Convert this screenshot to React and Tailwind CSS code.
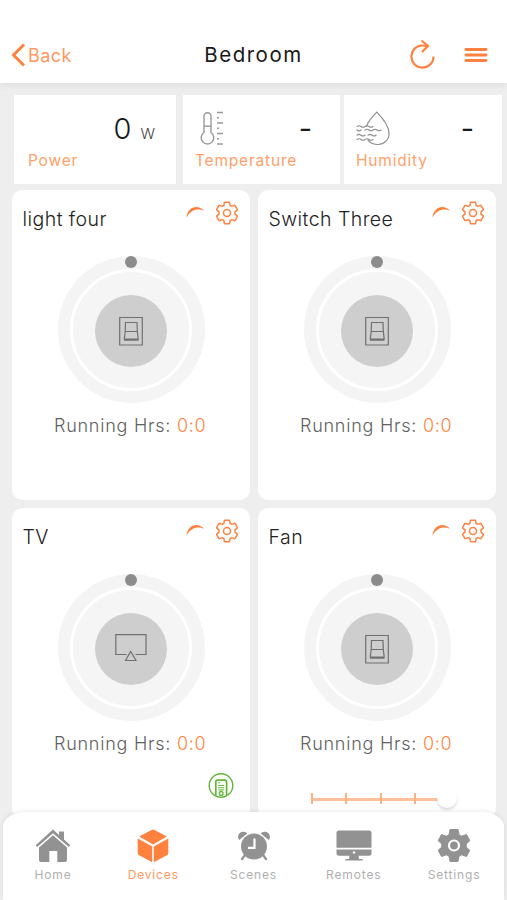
import React from 'react';

const sensors = [
  { label: 'Power', value: '0', unit: 'W', box: 'w-[162px] mr-[7px] pl-[14px]', valueBox: 'right-[21px]' },
  { label: 'Temperature', value: '-', icon: ThermometerIcon, box: 'w-[157px] mr-[4px] pl-[12px]', valueBox: 'right-[28px]' },
  { label: 'Humidity', value: '-', icon: HumidityIcon, box: 'w-[158px] pl-[12px]', valueBox: 'right-[28px]' },
];

const devices = [
  { name: 'light four', icon: SwitchIcon },
  { name: 'Switch Three', icon: SwitchIcon },
  { name: 'TV', icon: TvIcon, remote: true },
  { name: 'Fan', icon: SwitchIcon, slider: true },
];

const tabs = [
  { label: 'Home', icon: HomeIcon },
  { label: 'Devices', icon: CubeIcon, active: true },
  { label: 'Scenes', icon: ClockIcon },
  { label: 'Remotes', icon: MonitorIcon },
  { label: 'Settings', icon: CogIcon },
];

function ThermometerIcon() {
  return (
    <svg width="34" height="36" viewBox="0 0 34 36" fill="none" stroke="#999" strokeWidth="1.4">
      <path d="M9 21.500V5.200a3.500 3.500 0 0 1 7 0v16.300a6.300 6.300 0 1 1-7 0Z" />
      <path d="M9 15.200h7" />
      <path d="M22 1.500h6M22 12h6M22 22.500h6M22 33h6M22 6.700h2M22 17.200h2M22 27.700h2" />
    </svg>
  );
}

function HumidityIcon() {
  return (
    <svg width="35" height="36" viewBox="0 0 35 36" fill="none" stroke="#8e8e8e" strokeWidth="1.2" strokeLinecap="round">
      <path d="M10.500 15.300C12.500 9.500 17.500 4.500 20.800 1.200C25.500 6 33 15.500 33 22.500C33 29 28 33.500 22 33.500C17.500 33.500 14.500 32 12 29.300" />
      <path d="M1 15.500q2-1.500 4 0t4 0t4 0t4 0M1 19q2 1.800 4 0M9 19q2-1.500 4 0t4 0t4 0t4 0M1 24.200q2-1.500 4 0t4 0M12 24.200q2-1.500 4 0t4 0M1 28.500q2-1.500 4 0t4 0t4 0t4 0" />
    </svg>
  );
}

function SwitchIcon() {
  return (
    <svg width="24" height="30" viewBox="0 0 24 30" fill="none" stroke="#707070" strokeWidth="1.200">
      <path d="M.700 1.500h22.600v27.500H.700Z" />
      <path d="M6.500 6.500h11.500l.3 9H6.200ZM6.200 15.500l-.9 7.500h13.900l-.9-7.500M5 24.200h14.500" />
    </svg>
  );
}

function TvIcon() {
  return (
    <svg width="32" height="30" viewBox="0 0 32 30" fill="none" stroke="#707070" strokeWidth="1.200">
      <path d="M11.500 20.500H.800V.700h30.200v19.800H20.500" />
      <path d="M15.700 17.500l5.300 9H10.500Z" />
    </svg>
  );
}

function GearIcon() {
  return (
    <svg width="24" height="24" viewBox="0 0 24 24" fill="none" stroke="#FF813F" strokeWidth="1.500" strokeLinejoin="round">
      <path d="M9.900 1.200h4.200q.4 0 .5.500l.5 2.700 1.700 1 2.600-1q.5-.2.800.3l2.100 3.600q.2.400-.2.800L20 10.900v2.200l2.100 1.800q.4.400.2.800l-2.100 3.600q-.3.500-.8.300l-2.600-1-1.700 1-.5 2.700q-.1.500-.5.500H9.900q-.4 0-.5-.5l-.5-2.700-1.700-1-2.600 1q-.5.200-.8-.3l-2.100-3.600q-.2-.4.200-.8L4 13.100v-2.200L1.900 9.100q-.4-.4-.2-.8l2.100-3.600q.3-.5.800-.3l2.600 1 1.700-1 .5-2.700q.1-.5.500-.5Z" />
      <circle cx="12" cy="12" r="3.500" />
    </svg>
  );
}

// thin arc that tapers towards both ends
function Spinner() {
  return (
    <svg width="20" height="24" viewBox="0 0 20 24">
      <path d="M.500 12.700C1.500 1.500 12-1 18 5.700C12 2.900 4.800 4.300.500 12.700Z" fill="#FF813F" />
    </svg>
  );
}

function RemoteIcon() {
  return (
    <svg width="26" height="26" viewBox="0 0 26 26" fill="none" stroke="#62b536">
      <circle cx="13" cy="12.500" r="11.800" strokeWidth="1.400" />
      <path d="M7.800 23V9q0-1.800 1.800-1.800h7.200q1.800 0 1.800 1.800v14" strokeWidth="1.700" />
      <path d="M10.200 9.700h2M10.200 12.500h6M10.200 14.700h6M10.200 16.900h6" strokeWidth="1" />
      <circle cx="13.200" cy="20.400" r="1.900" strokeWidth="1.300" />
    </svg>
  );
}

function HomeIcon() {
  return (
    <svg width="36" height="36" viewBox="0 0 36 36" fill="#929292">
      <path d="M18 1.500 24 7V3.500h5V11.500L35.300 17.200 33.800 19 18 5.200 2.200 19 .700 17.200Z" />
      <path d="M18 7.300 32 19.500V32q0 2-2 2h-7.700V23h-8v11H6q-2 0-2-2V19.500Z" />
    </svg>
  );
}

function CubeIcon() {
  return (
    <svg width="36" height="36" viewBox="0 0 36 36" fill="#FF813F">
      <path d="M16.500 1.900q1.500-.8 3 0l12.300 6.600L18 16.500 4.200 8.500Z" />
      <path d="M2.700 10.500 17.200 18.500v15.700L4.200 27.300q-1.500-.8-1.500-2.400Z" />
      <path d="M33.300 10.500 18.800 18.500v15.700l13-6.900q1.500-.8 1.500-2.400Z" />
    </svg>
  );
}

function ClockIcon() {
  return (
    <svg width="36" height="36" viewBox="0 0 36 36">
      <g fill="#929292">
        <path d="M3.200 12A4.600 4.600 0 1 1 11.300 5.600ZM32.800 12A4.600 4.600 0 1 0 24.700 5.600Z" />
        <circle cx="18" cy="18.500" r="13" />
      </g>
      <path d="m9 27-3 4M27 27l3 4" stroke="#929292" strokeWidth="2.200" strokeLinecap="round" />
      <path d="M18.500 10.500v9.300H12" fill="none" stroke="#fff" strokeWidth="2.200" />
    </svg>
  );
}

function MonitorIcon() {
  return (
    <svg width="36" height="36" viewBox="0 0 36 36" fill="#929292">
      <path d="M.500 5q0-2.500 2.500-2.500h30Q35.500 2.500 35.500 5v14.800H.500ZM.500 21.500h35v3.800q0 2.500-2.500 2.500H22.500l.5 3.200h2.500q1.500 0 1.500 1.500H9q0-1.500 1.500-1.500H13l.5-3.200H3q-2.500 0-2.500-2.500Z" />
      <circle cx="18" cy="24.500" r="1.200" fill="#fff" />
    </svg>
  );
}

function CogIcon() {
  return (
    <svg width="36" height="36" viewBox="0 0 36 36">
      <path d="M14 1.500h8l1 5.200 2.500 1.500 5-1.700 3.300 6.200-3.600 3.200v3.200l3.600 3.200-3.300 6.200-5-1.700-2.500 1.500-1 5.200h-8l-1-5.200-2.500-1.500-5 1.700-3.300-6.200 3.600-3.200v-3.200l-3.600-3.200 3.300-6.200 5 1.700 2.500-1.500Z" fill="#929292" stroke="#929292" strokeLinejoin="round" />
      <circle cx="18" cy="17.500" r="5" fill="#929292" stroke="#fff" strokeWidth="2.200" />
    </svg>
  );
}

function Sensor({ sensor }) {
  const Icon = sensor.icon;
  return (
    <div className={`relative h-[89px] shrink-0 bg-white pt-4 ${sensor.box}`}>
      <div className="h-9">{Icon && <Icon />}</div>
      <div className={`absolute top-[16px] flex items-baseline gap-[9px] text-[29px] leading-9 text-[#191919] ${Icon ? 'font-normal' : ''} ${sensor.valueBox}`}>
        {sensor.value}
        {sensor.unit && <span className="text-[15px] text-[#444]">{sensor.unit}</span>}
      </div>
      <p className="mt-1 text-[15.500px] leading-5 font-normal tracking-[0.8px] text-[#ff9f69]">{sensor.label}</p>
    </div>
  );
}

function Dial({ icon: Icon }) {
  return (
    <div className="relative flex size-[147px] items-center justify-center rounded-full bg-[#f4f4f4]">
      <div className="flex size-[122px] items-center justify-center rounded-full border-3 border-white bg-[#f5f5f5]">
        <div className="mt-[2px] flex size-[72px] items-center justify-center rounded-full bg-[#cecece]">
          <Icon />
        </div>
      </div>
      <span className="absolute top-0 left-[67px] size-3 rounded-full bg-[#8c8c8c]" />
    </div>
  );
}

function SpeedSlider() {
  return (
    <div className="relative mt-[37px] ml-[53px] flex h-3 w-[137px] items-center">
      <div className="h-[3px] w-full bg-[#ffc09b]" />
      <div className="absolute inset-y-0 left-0 flex w-[105px] justify-between">
        {[0, 1, 2, 3].map((tick) => (
          <span key={tick} className="h-[11px] w-[2px] bg-[#ffb07f]" />
        ))}
      </div>
      <span className="absolute -right-[9px] top-[-5px] size-5 rounded-full bg-white shadow-[0_2px_3px_rgba(0,0,0,0.14)]" />
    </div>
  );
}

function DeviceCard({ device }) {
  return (
    <div className="h-[310px] rounded-[10px] bg-white">
      <div className="flex h-[66px] pl-[10.500px] pr-[11px]">
        <h2 className="flex-1 pt-[16px] text-[19.500px] leading-[26px] tracking-[0.450px] text-[#222]">{device.name}</h2>
        <div className="flex gap-[9px] pt-[11px]">
          <div className="pt-[4px]"><Spinner /></div>
          <GearIcon />
        </div>
      </div>
      <div className="flex justify-center"><Dial icon={device.icon} /></div>
      <p className="mt-[11px] whitespace-nowrap pl-[42px] text-[18px] leading-6 tracking-[0.750px] text-[#606060]">
        Running Hrs: <span className="text-[#ff8642]">0:0</span>
      </p>
      {device.remote && <div className="flex justify-end pt-[17px] pr-4"><RemoteIcon /></div>}
      {device.slider && <SpeedSlider />}
    </div>
  );
}

export default function App() {
  return (
    <div className="relative h-[900px] w-[507px] overflow-hidden bg-[#eeeeee] font-[Inter,sans-serif] font-light">
      <header className="relative flex h-[83px] items-center bg-white pt-[27px] shadow-[0_2px_8px_rgba(0,0,0,0.07)]">
        <button className="flex w-[150px] items-center gap-[2px] pl-[11px] text-[18px] font-normal tracking-[0.450px] text-[#ff995f]">
          <svg width="15" height="24" viewBox="0 0 15 24" fill="none" stroke="#FF813F" strokeWidth="3">
            <path d="M13 1.500 2.500 12 13 22.500" />
          </svg>
          <span className="pt-px">Back</span>
        </button>
        <h1 className="flex-1 text-center text-[20.500px] font-normal tracking-[1.500px] text-[#191919]">Bedroom</h1>
        <div className="flex w-[150px] items-center gap-[28px] pl-[51px]">
          <svg width="28" height="32" viewBox="0 0 28 32" fill="none" stroke="#FF813F" strokeWidth="2.200">
            <path d="M25.500 17.500A11 11 0 1 1 19 7.500" />
            <path d="m13.500 1.500 6.500 5.500-6 6" />
          </svg>
          <svg width="24" height="16" viewBox="0 0 24 16" stroke="#FF813F" strokeWidth="2.800" strokeLinecap="round">
            <path d="M2 2.500h20M2 8h20M2 13.500h20" />
          </svg>
        </div>
      </header>

      <main>
        <section className="flex pt-3 pl-[14px]">
          {sensors.map((s) => <Sensor key={s.label} sensor={s} />)}
        </section>
        <section className="mt-[6px] grid grid-cols-[238px_238px] gap-2 pl-3">
          {devices.map((d) => <DeviceCard key={d.name} device={d} />)}
        </section>
      </main>

      <nav className="absolute right-[3px] bottom-0 left-[3px] flex h-[88px] justify-between rounded-t-[24px_14px] bg-white pt-4 shadow-[0_-1px_5px_rgba(0,0,0,0.08)]">
        {tabs.map(({ label, icon: Icon, active }) => (
          <a key={label} className="flex w-[100px] flex-col items-center">
            <Icon />
            <span className={`mt-[3px] text-[12px] leading-4 font-normal tracking-[0.850px] ${active ? 'text-[#ff995f]' : 'text-[#b0b0b0]'}`}>{label}</span>
          </a>
        ))}
      </nav>
    </div>
  );
}
